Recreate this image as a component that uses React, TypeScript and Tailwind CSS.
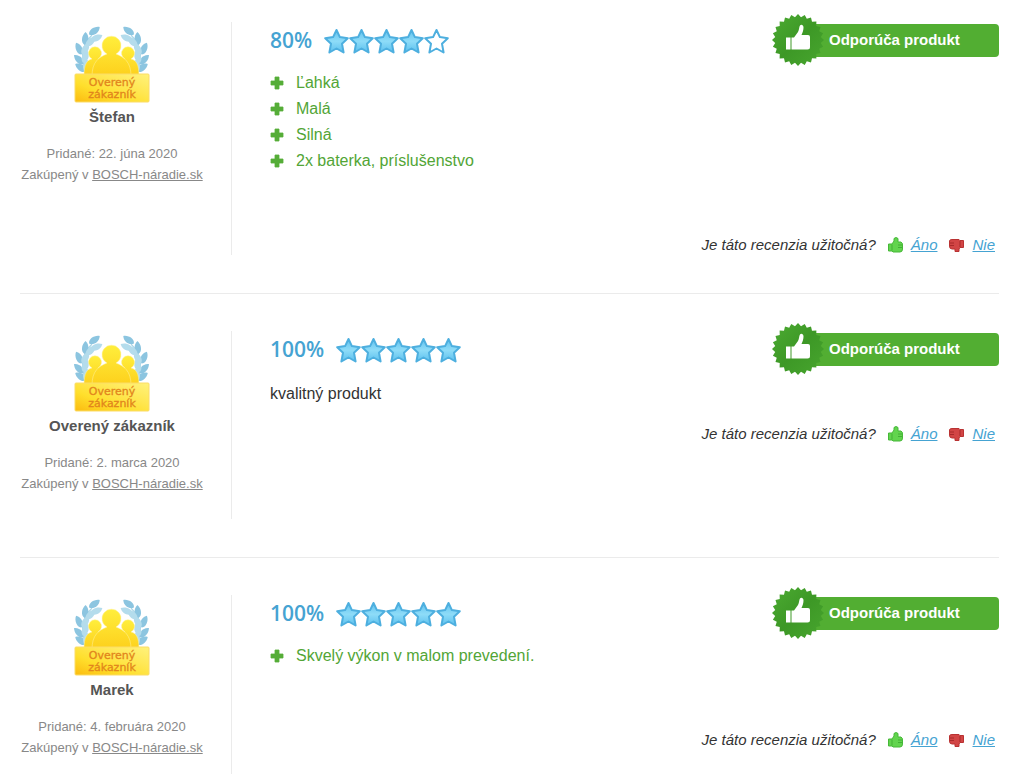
import type { ReactNode } from "react"

type Review = {
    name: string
    date: string
    rating: number
    pros?: string[]
    text?: string
}

const reviews: Review[] = [
    { name: "Štefan", date: "22. júna 2020", rating: 80, pros: ["Ľahká", "Malá", "Silná", "2x baterka, príslušenstvo"] },
    { name: "Overený zákazník", date: "2. marca 2020", rating: 100, text: "kvalitný produkt" },
    { name: "Marek", date: "4. februára 2020", rating: 100, pros: ["Skvelý výkon v malom prevedení."] },
]

// x, y, angle of each leaf, bottom to top
const leaves = [
    [7, 42, -55], [12, 40, 5], [5, 34, -45], [11, 31, 20], [5, 23, -25],
    [11, 23, 30], [11, 13, 5], [16, 16, 45], [20, 5, 55], [22, 12, 65],
]

function Laurel(){
    return(
        <g>
            <path d="M15 48C5 36 7 20 18 9" fill="none" stroke="#a9d6e8" strokeWidth="1.2" />
            {leaves.map(([x, y, angle], i) => (
                <path
                    key={i}
                    d="M0 -7C5 -3 4 4 0 6C-4 4 -4 -3 0 -7Z"
                    fill={i % 2 ? "#b4dcec" : "#8cc5e0"}
                    transform={`translate(${x} ${y}) rotate(${angle})`}
                />
            ))}
        </g>
    )
}

function VerifiedBadge(){
    return(
        <svg width="76" height="77" viewBox="0 0 76 77" role="img" aria-label="Overený zákazník">
            <defs>
                <linearGradient id="people" x1="0" y1="0" x2="0" y2="1">
                    <stop offset="0" stopColor="#ffee3c" />
                    <stop offset="1" stopColor="#fdd01c" />
                </linearGradient>
                <linearGradient id="plate" x1="0" y1="1" x2="1" y2="0">
                    <stop offset="0" stopColor="#fbbb10" />
                    <stop offset="0.35" stopColor="#ffdf2c" />
                    <stop offset="0.6" stopColor="#ffe64e" />
                    <stop offset="1" stopColor="#fff27c" />
                </linearGradient>
            </defs>
            <Laurel />
            <g transform="translate(75 0) scale(-1 1)"><Laurel /></g>
            <g fill="url(#people)" stroke="#fff3a0" strokeWidth="0.5">
                <path d="M10 50C10 38 13 34 18 33A6.500 6.500 0 1 1 24 33C35 36 32 50 32 50Z" />
                <path d="M65 50C65 38 62 34 57 33A6.500 6.500 0 1 0 51 33C40 36 43 50 43 50Z" />
                <path d="M18 50C18 36 25 31 33 28A9.500 9.500 0 1 1 42 28C50 31 57 36 57 50Z" />
            </g>
            <rect x="1" y="48" width="74" height="28" rx="1" fill="url(#plate)" stroke="#fbdc66" />
            <g fill="#e2851c" stroke="#e2851c" strokeWidth="0.3" fontSize="11" fontFamily="'DejaVu Sans', 'Noto Sans', sans-serif" textAnchor="middle">
                <text x="38" y="60">Overený</text>
                <text x="38" y="72">zákazník</text>
            </g>
        </svg>
    )
}

function Star({ filled }: { filled: boolean }){
    return(
        <svg width="25" height="26" viewBox="0 0 25 26" aria-hidden="true">
            <defs>
                <linearGradient id="star" x1="0" y1="0" x2="0" y2="1">
                    <stop offset="0" stopColor="#62c2ee" />
                    <stop offset="0.5" stopColor="#8edcf8" />
                    <stop offset="1" stopColor="#5cc0ee" />
                </linearGradient>
            </defs>
            <path
                d="M12.500 2L15.900 9.100L23.800 10.200L18 15.700L19.600 24.500L12.500 20.500L5.400 24.500L7 15.700L1.200 10.200L9.100 9.100Z"
                fill={filled ? "url(#star)" : "#fff"}
                stroke="#4dafdf"
                strokeWidth="2"
                strokeLinejoin="round"
            />
        </svg>
    )
}

function Seal(){
    const points = Array.from({ length: 48 }, (_, i) => {
        const r = i % 2 ? 23 : 26
        const a = (i * Math.PI) / 24
        return `${26 + r * Math.cos(a)},${26 + r * Math.sin(a)}`
    }).join(" ")

    return(
        <svg className="relative z-10 -mr-6 shrink-0" width="52" height="52" viewBox="0 0 52 52" aria-hidden="true">
            <defs>
                <linearGradient id="seal" x1="0" y1="0" x2="1" y2="1">
                    <stop offset="0" stopColor="#4cab32" />
                    <stop offset="0.5" stopColor="#3d9826" />
                    <stop offset="1" stopColor="#48a62f" />
                </linearGradient>
            </defs>
            <polygon points={points} fill="url(#seal)" />
            <path d="M14 23.500H18.500V35.500H14Z" fill="#fff" />
            <path d="M19.500 23.500H22L26 18C27.300 16 27 13 28 11.500C28.800 10.200 31.500 10.500 31.500 13.500C31.500 16.500 30.500 18.500 29.500 21H36Q38 21 38 23V33Q38 35.500 35.500 35.500H19.500Z" fill="#fff" />
        </svg>
    )
}

function Recommended(){
    return(
        <div className="flex h-[52px] w-[227px] items-center">
            <Seal />
            <div className="flex h-[33px] flex-1 items-center rounded bg-[#52ae32] pl-[29px] text-[15px] font-bold text-white">
                Odporúča produkt
            </div>
        </div>
    )
}

function ThumbUp(){
    return(
        <svg width="15" height="16" viewBox="0 0 15 16" aria-hidden="true">
            <path d="M0.500 7H4L6 4V1.500Q8 -0.500 10 1.500V5H13Q15 6 14.500 9V12Q14.500 15 12 15H5L4 14H0.500Z" fill="#62d44e" stroke="#46b838" />
            <path d="M4 7.500V13.500M10 8H14M10 10.500H14" fill="none" stroke="#42b035" />
        </svg>
    )
}

function ThumbDown(){
    return(
        <svg width="15" height="16" viewBox="0 0 15 16" aria-hidden="true">
            <path d="M0.500 4Q0.500 2.500 3 2.500H10L11 3.500H14.500V10.500H11L10 12V14.500H6V12H3Q0.500 12 0.500 9Z" fill="#d24545" stroke="#b93232" />
            <path d="M11 4V10M1 6H5M1 8.500H5" fill="none" stroke="#a82a2a" />
        </svg>
    )
}

function Vote({ title, children }: { title: string, children: ReactNode }){
    return(
        <span className="flex items-center gap-2">
            {children}
            <a href="#" className="text-[#45a3d2] underline">{title}</a>
        </span>
    )
}

function ReviewRow({ review }: { review: Review }){
    return(
        <article className="flex border-b border-[#ebebeb] pt-[37px] pb-[38px] first:pt-0">
            <div className="w-[212px] shrink-0 border-r border-[#ebebeb] pr-[27px] pb-[25px] text-center">
                <div className="flex justify-center pt-1 pb-1">
                    <VerifiedBadge />
                </div>
                <h3 className="text-[15px] leading-5 font-bold text-[#555]">{review.name}</h3>
                <div className="mt-4 text-[13px] leading-[21px] whitespace-nowrap text-[#888]">
                    <p>Pridané: {review.date}</p>
                    <p>Zakúpený v <a href="#" className="underline">BOSCH-náradie.sk</a></p>
                </div>
            </div>
            <div className="relative min-w-0 flex-1 pl-[38px]">
                <div className="flex h-[38px] items-center">
                    <span className="mr-3 font-['Open_Sans',sans-serif] text-[21px] font-semibold text-[#45a3d2]">{review.rating}%</span>
                    {[20, 40, 60, 80, 100].map((n) => <Star key={n} filled={review.rating >= n} />)}
                </div>
                <div className="absolute -top-2 right-0">
                    <Recommended />
                </div>
                {review.pros && (
                    <ul className="mt-[10px] mb-[60px]">
                        {review.pros.map((item) => (
                            <li key={item} className="flex items-center gap-3 leading-[26px] text-[#52a536]">
                                <svg width="14" height="14" viewBox="0 0 14 14" aria-hidden="true">
                                    <path d="M5 1H9V5H13V9H9V13H5V9H1V5H5Z" fill="#55ad38" stroke="#55ad38" strokeWidth="0.8" strokeLinejoin="round" />
                                </svg>
                                {item}
                            </li>
                        ))}
                    </ul>
                )}
                {review.text && <p className="mt-3 mb-4 leading-[26px]">{review.text}</p>}
                <div className="flex items-center justify-end gap-3 pr-1 text-[15px] leading-[21px] italic">
                    <span>Je táto recenzia užitočná?</span>
                    <Vote title="Áno"><ThumbUp /></Vote>
                    <Vote title="Nie"><ThumbDown /></Vote>
                </div>
            </div>
        </article>
    )
}

export default function App(){
    return(
        <main className="bg-white px-5 pt-[22px] font-['Liberation_Sans',Arial,sans-serif] text-base text-[#333]">
            {reviews.map((review) => <ReviewRow key={review.name} review={review} />)}
        </main>
    )
}
